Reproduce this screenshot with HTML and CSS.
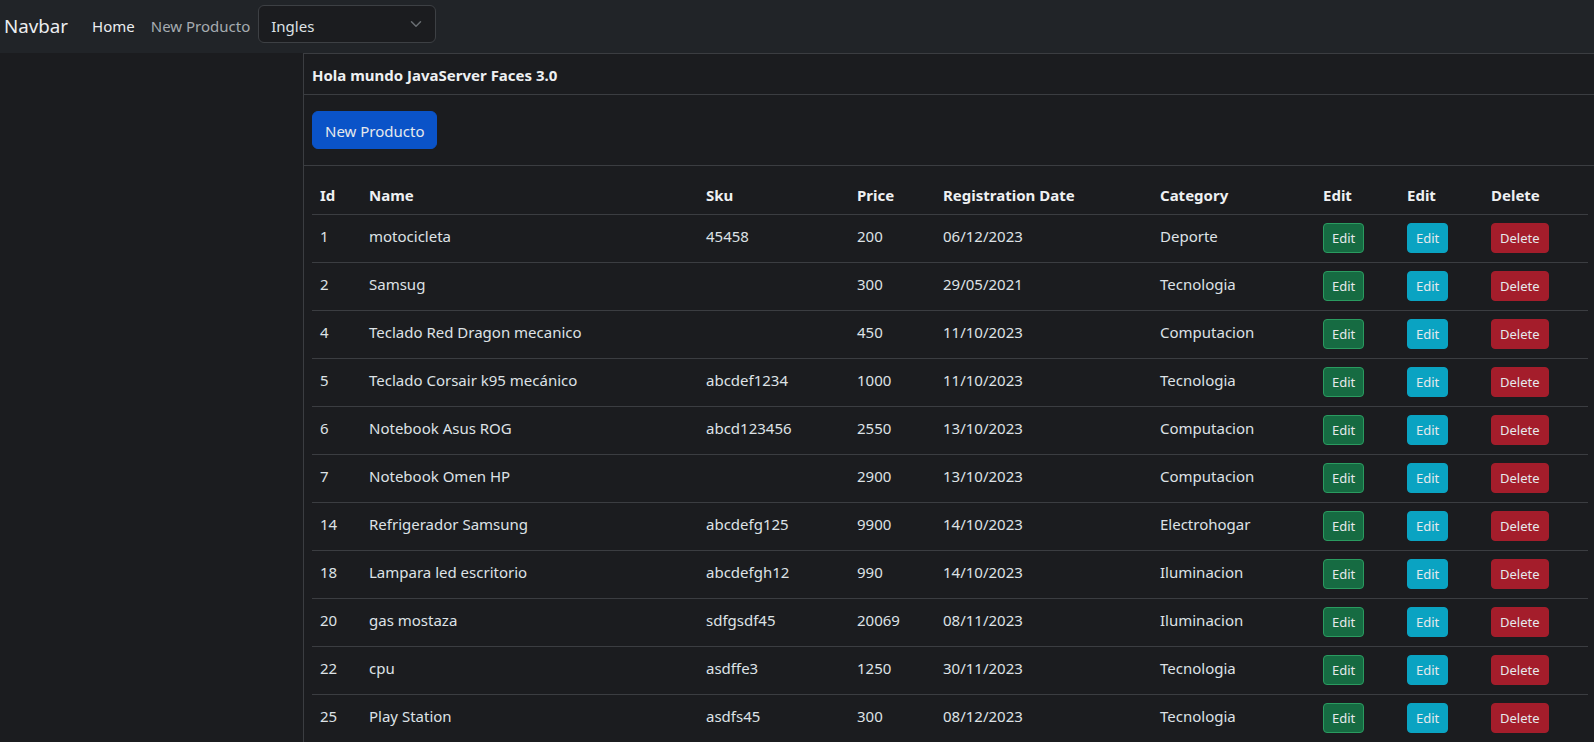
FILE: index.html
```html
<!DOCTYPE html>
<html lang="es">
<head>
<meta charset="utf-8">
<title>Productos</title>
<link rel="stylesheet" href="styles.css">
</head>
<body>
<nav class="navbar">
  <a class="brand" href="#">Navbar</a>
  <ul class="nav-links">
    <li><a class="nav-link active" href="#">Home</a></li>
    <li><a class="nav-link" href="#">New Producto</a></li>
  </ul>
  <div class="select-wrap">
    <select class="lang-select">
      <option>Ingles</option>
      <option>Español</option>
    </select>
    <svg class="chevron" width="16" height="12" viewBox="0 0 16 16"><path d="m2 5 6 6 6-6" fill="none" stroke="#6a6e73" stroke-width="2" stroke-linecap="round" stroke-linejoin="round"/></svg>
  </div>
</nav>
<div class="layout">
  <aside class="sidebar"></aside>
  <main class="content">
    <div class="card">
      <div class="card-header">Hola mundo JavaServer Faces 3.0</div>
      <div class="card-body">
        <button class="btn btn-primary">New Producto</button>
      </div>
      <div class="table-wrap">
        <table class="table">
          <colgroup>
            <col class="c-id"><col class="c-name"><col class="c-sku"><col class="c-price"><col class="c-date"><col class="c-cat"><col class="c-edit"><col class="c-edit"><col class="c-del">
          </colgroup>
          <thead>
            <tr><th>Id</th><th>Name</th><th>Sku</th><th>Price</th><th>Registration Date</th><th>Category</th><th>Edit</th><th>Edit</th><th>Delete</th></tr>
          </thead>
          <tbody>
            <tr><td>1</td><td>motocicleta</td><td>45458</td><td>200</td><td>06/12/2023</td><td>Deporte</td><td class="act"><button class="btn btn-sm btn-success">Edit</button></td><td class="act"><button class="btn btn-sm btn-info">Edit</button></td><td class="act"><button class="btn btn-sm btn-danger">Delete</button></td></tr>
            <tr><td>2</td><td>Samsug</td><td></td><td>300</td><td>29/05/2021</td><td>Tecnologia</td><td class="act"><button class="btn btn-sm btn-success">Edit</button></td><td class="act"><button class="btn btn-sm btn-info">Edit</button></td><td class="act"><button class="btn btn-sm btn-danger">Delete</button></td></tr>
            <tr><td>4</td><td>Teclado Red Dragon mecanico</td><td></td><td>450</td><td>11/10/2023</td><td>Computacion</td><td class="act"><button class="btn btn-sm btn-success">Edit</button></td><td class="act"><button class="btn btn-sm btn-info">Edit</button></td><td class="act"><button class="btn btn-sm btn-danger">Delete</button></td></tr>
            <tr><td>5</td><td>Teclado Corsair k95 mecánico</td><td>abcdef1234</td><td>1000</td><td>11/10/2023</td><td>Tecnologia</td><td class="act"><button class="btn btn-sm btn-success">Edit</button></td><td class="act"><button class="btn btn-sm btn-info">Edit</button></td><td class="act"><button class="btn btn-sm btn-danger">Delete</button></td></tr>
            <tr><td>6</td><td>Notebook Asus ROG</td><td>abcd123456</td><td>2550</td><td>13/10/2023</td><td>Computacion</td><td class="act"><button class="btn btn-sm btn-success">Edit</button></td><td class="act"><button class="btn btn-sm btn-info">Edit</button></td><td class="act"><button class="btn btn-sm btn-danger">Delete</button></td></tr>
            <tr><td>7</td><td>Notebook Omen HP</td><td></td><td>2900</td><td>13/10/2023</td><td>Computacion</td><td class="act"><button class="btn btn-sm btn-success">Edit</button></td><td class="act"><button class="btn btn-sm btn-info">Edit</button></td><td class="act"><button class="btn btn-sm btn-danger">Delete</button></td></tr>
            <tr><td>14</td><td>Refrigerador Samsung</td><td>abcdefg125</td><td>9900</td><td>14/10/2023</td><td>Electrohogar</td><td class="act"><button class="btn btn-sm btn-success">Edit</button></td><td class="act"><button class="btn btn-sm btn-info">Edit</button></td><td class="act"><button class="btn btn-sm btn-danger">Delete</button></td></tr>
            <tr><td>18</td><td>Lampara led escritorio</td><td>abcdefgh12</td><td>990</td><td>14/10/2023</td><td>Iluminacion</td><td class="act"><button class="btn btn-sm btn-success">Edit</button></td><td class="act"><button class="btn btn-sm btn-info">Edit</button></td><td class="act"><button class="btn btn-sm btn-danger">Delete</button></td></tr>
            <tr><td>20</td><td>gas mostaza</td><td>sdfgsdf45</td><td>20069</td><td>08/11/2023</td><td>Iluminacion</td><td class="act"><button class="btn btn-sm btn-success">Edit</button></td><td class="act"><button class="btn btn-sm btn-info">Edit</button></td><td class="act"><button class="btn btn-sm btn-danger">Delete</button></td></tr>
            <tr><td>22</td><td>cpu</td><td>asdffe3</td><td>1250</td><td>30/11/2023</td><td>Tecnologia</td><td class="act"><button class="btn btn-sm btn-success">Edit</button></td><td class="act"><button class="btn btn-sm btn-info">Edit</button></td><td class="act"><button class="btn btn-sm btn-danger">Delete</button></td></tr>
            <tr><td>25</td><td>Play Station</td><td>asdfs45</td><td>300</td><td>08/12/2023</td><td>Tecnologia</td><td class="act"><button class="btn btn-sm btn-success">Edit</button></td><td class="act"><button class="btn btn-sm btn-info">Edit</button></td><td class="act"><button class="btn btn-sm btn-danger">Delete</button></td></tr>
          </tbody>
        </table>
      </div>
    </div>
  </main>
</div>
</body>
</html>
```
FILE: styles.css
```css
* { box-sizing: border-box; }

html, body {
  margin: 0;
  padding: 0;
  background: #1b1c1f;
  color: #dee2e6;
  font-family: "Noto Sans", "Open Sans", sans-serif;
  font-size: 15px;
  line-height: 24px;
  overflow-x: hidden;
}

/* Navbar */
.navbar {
  display: flex;
  align-items: center;
  height: 53px;
  padding: 0 0 5px 0;
  background: #212428;
}

.brand {
  color: #eceef0;
  text-decoration: none;
  font-size: 18.75px;
  line-height: 30px;
  padding-top: 4px;
  margin-left: 4px;
  margin-right: 16px;
}

.nav-links {
  display: flex;
  list-style: none;
  margin: 0;
  padding: 0;
}

.nav-link {
  display: block;
  padding: 10px 8px 6px;
  color: rgba(222, 226, 230, 0.72);
  text-decoration: none;
}

.nav-link.active { color: #eceef0; }

.select-wrap {
  position: relative;
  width: 178px;
  height: 38px;
}

.lang-select {
  appearance: none;
  -webkit-appearance: none;
  width: 100%;
  height: 100%;
  padding: 8px 36px 4px 12px;
  background: #1b1c1f;
  color: #dee2e6;
  border: 1px solid #3d4044;
  border-radius: 6px;
  font: inherit;
  line-height: 24px;
}

.chevron {
  position: absolute;
  right: 12px;
  top: 13px;
  pointer-events: none;
}

/* Layout */
.layout {
  display: flex;
}

.sidebar {
  flex: 0 0 303px;
}

.content {
  flex: 1;
  min-width: 0;
}

.card {
  border-top: 1px solid #3b3d41;
  border-left: 1px solid #3b3d41;
}

.card-header {
  padding: 9px 8px 7px;
  font-weight: 700;
  border-bottom: 1px solid #3b3d41;
  color: #eef0f2;
}

.card-body {
  padding: 16px 8px;
  border-bottom: 1px solid #3b3d41;
}

.table-wrap {
  padding: 8px 6px 8px 8px;
}

/* Buttons */
.btn {
  display: inline-block;
  font: inherit;
  font-size: 15px;
  line-height: 24px;
  padding: 7px 12px 5px;
  border: 1px solid transparent;
  border-radius: 6px;
  color: #e6e9ec;
  cursor: pointer;
  vertical-align: middle;
}

.btn-primary {
  background: #0a53c8;
  border-color: #0a53c8;
}

.btn-sm {
  font-size: 13px;
  line-height: 21px;
  padding: 4px 8px 3px;
  border-radius: 4px;
}

.btn-success {
  background: #166b42;
  border-color: #2a9b60;
}

.btn-info {
  background: #0aa3c2;
  border-color: #0aa3c2;
}

.btn-danger {
  background: #a41d2b;
  border-color: #a41d2b;
}

/* Table */
.table {
  width: 1276px;
  border-collapse: collapse;
  table-layout: fixed;
}

.c-id { width: 49px; }
.c-name { width: 337px; }
.c-sku { width: 151px; }
.c-price { width: 86px; }
.c-date { width: 217px; }
.c-cat { width: 163px; }
.c-edit { width: 84px; }
.c-del { width: 105px; }

.table th,
.table td {
  padding: 9px 8px 7px;
  text-align: left;
  vertical-align: top;
  border-bottom: 1px solid #3b3d41;
  white-space: nowrap;
}

.table td.act {
  padding: 8px;
}

.table th {
  font-weight: 700;
  color: #eef0f2;
}

.table td { height: 48px; }
```
